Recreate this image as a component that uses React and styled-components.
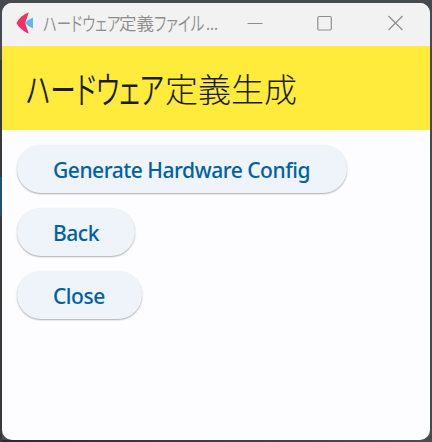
import React from "react";
import styled, { createGlobalStyle } from "styled-components";

const GlobalStyle = createGlobalStyle`
  * { box-sizing: border-box; }
  html, body { margin: 0; padding: 0; }
  body { background: #45494f; overflow: hidden; }
`;

const Desktop = styled.div`
  width: 432px;
  height: 442px;
  padding: 3px 2px 2px;
  background:
    linear-gradient(#22506f, #22506f) 0 177px / 2px 39px no-repeat,
    linear-gradient(90deg, #38393b 0 2px, transparent 2px) 0 60px / 100% 382px no-repeat,
    linear-gradient(90deg, #2b2a2b, #3c3c3e 40%, #4a4c51) 0 440px / 100% 2px no-repeat,
    #464b52;
`;

const Window = styled.main`
  display: flex;
  flex-direction: column;
  height: 437px;
  overflow: hidden;
  border-radius: 10px;
  background: #fdfcff;
  font-family: "Noto Sans", "Noto Sans CJK JP", sans-serif;
`;

const TitleBar = styled.header`
  display: flex;
  align-items: center;
  flex: 0 0 43px;
  padding-left: 14px;
  background: #f2f2f2;
`;

const Logo = styled.svg`
  flex: none;
  width: 18px;
  height: 22px;
  margin-right: 9px;
  margin-top: -3px;
`;

const WindowTitle = styled.div`
  display: flex;
  flex: none;
  width: 178px;
  height: 24px;
  margin-top: -4px;
  color: #8c8c8c;
  font: 350 17.5px/24px "Noto Sans CJK JP", sans-serif;
  white-space: nowrap;
`;

const Run = styled.span`
  flex: none;
  width: ${(p) => p.$width}px;
  font-weight: ${(p) => p.$weight || "inherit"};
  font-feature-settings: ${(p) => (p.$kana ? '"palt"' : "normal")};

  & > span {
    display: inline-block;
    transform: scale(${(p) => p.$scale || 1}, ${(p) => (p.$kana ? 1.12 : 1)});
    transform-origin: 0 50%;
  }
`;

const Controls = styled.div`
  display: flex;
  margin-left: -1px;
`;

const Control = styled.button`
  display: grid;
  place-items: center;
  width: 70px;
  height: 43px;
  padding: 0 0 3px;
  border: 0;
  background: none;

  svg {
    width: 16px;
    height: 16px;
    fill: none;
    stroke: #8e8e8e;
    stroke-width: 1.2;
  }
`;

const AppBar = styled.section`
  display: flex;
  align-items: center;
  flex: 0 0 84px;
  padding-left: 24px;
  background: #ffeb3b;
`;

const Heading = styled.h1`
  display: flex;
  margin: 0;
  color: #1a1c1e;
  font: 300 33px/44px "Noto Sans CJK JP", sans-serif;
  white-space: nowrap;
`;

const Actions = styled.div`
  display: flex;
  flex-direction: column;
  align-items: flex-start;
  gap: 15px;
  padding: 15px 14.5px;
`;

const ActionButton = styled.button`
  width: ${(p) => p.$width}px;
  height: 48px;
  padding: 2px 0 0 36.5px;
  border: 0;
  border-radius: 24px;
  background: #eff3fa;
  box-shadow: 0 1px 2px rgba(0, 0, 0, 0.26), 0 1px 1px rgba(0, 0, 0, 0.08);
  color: #0061a4;
  font: 500 21px/28px "Noto Sans", sans-serif;
  letter-spacing: -0.47px;
  text-align: left;
  white-space: nowrap;
`;

function Text({ children, ...props }) {
  return <Run {...props}><span>{children}</span></Run>;
}

export default function App() {
  return (
    <>
      <GlobalStyle />
      <Desktop>
        <Window>
          <TitleBar>
            <Logo viewBox="0 0 18 22" aria-hidden="true">
              <path d="M12.8.3C11.6 3.8 10.5 7.2 9.2 11c1.2 3.8 2.4 7.2 3.6 10.7C7.4 19.6 3 15.8.5 11 3 6.2 7.4 2.4 12.8.3z" fill="#f23064" />
              <path d="M17 5.6v10.8Q12.3 14.6 8.7 11 12.3 7.4 17 5.6z" fill="#5bbbe8" />
            </Logo>
            <WindowTitle>
              <Text $width={76} $kana $scale={0.82}>ハードウェア</Text>
              <Text $width={35}>定義</Text>
              <Text $width={52} $kana $scale={0.83}>ファイル</Text>
              <Text $width={15} $scale={0.85}>...</Text>
            </WindowTitle>
            <Controls>
              <Control aria-label="Minimize"><svg viewBox="0 0 16 16"><path d="M.5 8.5h15" /></svg></Control>
              <Control aria-label="Maximize"><svg viewBox="0 0 16 16"><rect x=".8" y="1.5" width="13.5" height="13.5" rx="1.5" /></svg></Control>
              <Control aria-label="Close window"><svg viewBox="0 0 16 16"><path d="m1.5 1 14 14M15.5 1l-14 14" /></svg></Control>
            </Controls>
          </TitleBar>
          <AppBar>
            <Heading>
              <Text $width={139} $kana $scale={0.775} $weight={350}>ハードウェア</Text>
              <Text $width={132}>定義生成</Text>
            </Heading>
          </AppBar>
          <Actions>
            <ActionButton $width={330}>Generate Hardware Config</ActionButton>
            <ActionButton $width={118}>Back</ActionButton>
            <ActionButton $width={125}>Close</ActionButton>
          </Actions>
        </Window>
      </Desktop>
    </>
  );
}
